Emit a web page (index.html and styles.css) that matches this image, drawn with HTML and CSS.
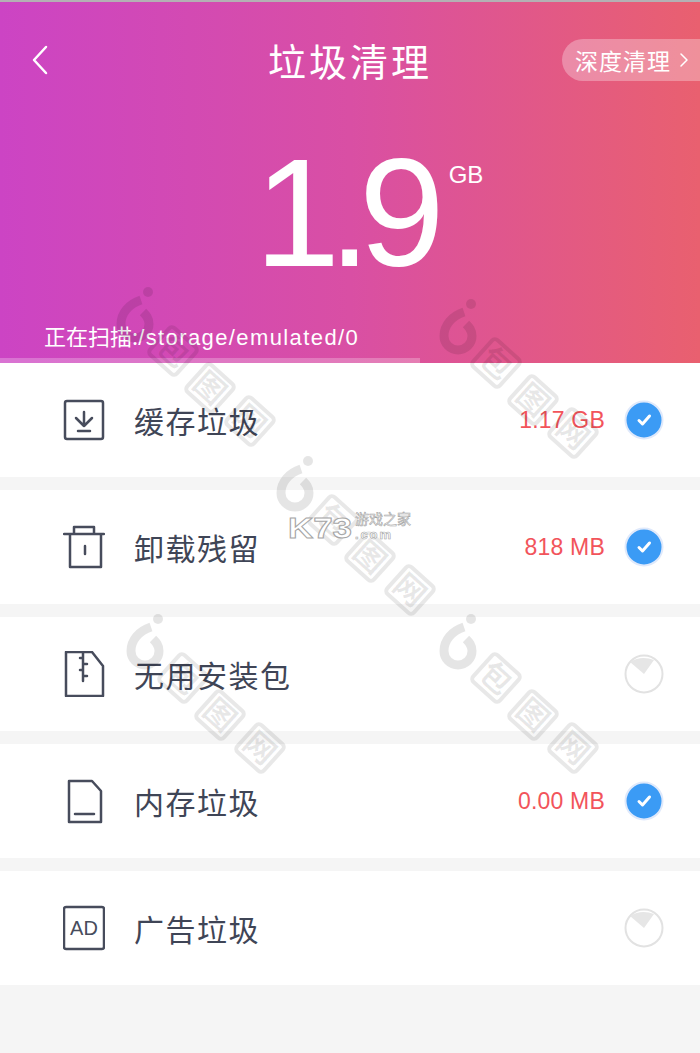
FILE: index.html
```html
<!DOCTYPE html>
<html lang="zh-CN">
<head>
    <meta charset="UTF-8">
    <meta name="viewport" content="width=device-width, initial-scale=1.0">
    <title>垃圾清理</title>
    <link rel="stylesheet" href="styles.css">
</head>
<body>
    <div class="page">
        <header class="summary">
            <div class="topbar">
                <svg class="back" width="20" height="32" viewBox="0 0 20 32"><path d="M16 3 4 16l12 13"/></svg>
                <h1>垃圾清理</h1>
                <div class="deep-clean">深度清理<svg width="12" height="16" viewBox="0 0 12 16"><path d="M3 2l6 6-6 6"/></svg></div>
            </div>
            <div class="total"><span class="total-num">1.9</span><span class="total-unit">GB</span></div>
            <div class="scan-path">正在扫描:<span>/storage/emulated/0</span></div>
            <div class="progress"><div class="progress-bar" style="width: 60%"></div></div>
        </header>

        <ul class="clean-list">
            <li class="clean-item">
                <svg class="item-icon" viewBox="0 0 42 46"><rect x="2" y="4" width="38" height="38" rx="2"/><path d="M21 15v14M13 21l8 8 8-8M15 34h12"/></svg>
                <span class="item-name">缓存垃圾</span>
                <span class="item-size">1.17 GB</span>
                <svg class="check" viewBox="0 0 40 40"><circle class="check-on" cx="20" cy="20" r="18.500"/><path class="check-mark" d="M15 20.500l3.500 3.500 7-8"/></svg>
            </li>
            <li class="clean-item">
                <svg class="item-icon" viewBox="0 0 42 46"><path d="M1 10h40M11 10V3h20v7M7 10v33h31V10M22 22v8"/></svg>
                <span class="item-name">卸载残留</span>
                <span class="item-size">818 MB</span>
                <svg class="check" viewBox="0 0 40 40"><circle class="check-on" cx="20" cy="20" r="18.500"/><path class="check-mark" d="M15 20.500l3.500 3.500 7-8"/></svg>
            </li>
            <li class="clean-item">
                <svg class="item-icon" viewBox="0 0 42 46"><path d="M3 1h26l11 14v30H3zM20 1v6h-3M20 7v6h4M20 13v6h-3M20 19v6h4M20 25v5"/></svg>
                <span class="item-name">无用安装包</span>
                <svg class="check" viewBox="0 0 40 40"><circle class="check-off" cx="20" cy="20" r="18.500"/><path class="check-wedge" d="M6 8Q17 1 30 6L20 20z"/></svg>
            </li>
            <li class="clean-item">
                <svg class="item-icon" viewBox="0 0 42 46"><path d="M6 3h23l9 10v31H6zM12 36h19"/></svg>
                <span class="item-name">内存垃圾</span>
                <span class="item-size">0.00 MB</span>
                <svg class="check" viewBox="0 0 40 40"><circle class="check-on" cx="20" cy="20" r="18.500"/><path class="check-mark" d="M15 20.500l3.500 3.500 7-8"/></svg>
            </li>
            <li class="clean-item">
                <svg class="item-icon" viewBox="0 0 42 46"><rect x="1" y="2" width="40" height="42" rx="2"/><text class="ad-text" x="21" y="30">AD</text></svg>
                <span class="item-name">广告垃圾</span>
                <svg class="check" viewBox="0 0 40 40"><circle class="check-off" cx="20" cy="20" r="18.500"/><path class="check-wedge" d="M6 8Q17 1 30 6L20 20z"/></svg>
            </li>
        </ul>

        <!-- stamp marks lying over the whole page -->
        <svg class="stamps" width="700" height="1053" viewBox="0 0 700 1053">
            <defs>
                <g id="stamp">
                    <path class="stamp-ring" d="M6-21C-6-17-14-8-14 3A14 14 0 1 0 14 3C14-3 11-6 8-9"/>
                    <circle class="stamp-dot" cx="13" cy="-29" r="5"/>
                    <g transform="translate(38 30) rotate(42)"><rect class="stamp-box" x="-18" y="-18" width="36" height="36" rx="4"/><text class="stamp-text" y="11">包</text></g>
                    <g transform="translate(75 67) rotate(42)"><rect class="stamp-box" x="-18" y="-18" width="36" height="36" rx="4"/><text class="stamp-text" y="11">图</text></g>
                    <g transform="translate(115 100) rotate(42)"><rect class="stamp-box" x="-18" y="-18" width="36" height="36" rx="4"/><text class="stamp-text" y="11">网</text></g>
                </g>
            </defs>
            <use href="#stamp" x="135" y="321"/>
            <use href="#stamp" x="458" y="333"/>
            <use href="#stamp" x="295" y="490"/>
            <use href="#stamp" x="145" y="648"/>
            <use href="#stamp" x="458" y="648"/>
            <text class="k73-logo" x="288" y="538" textLength="64" lengthAdjust="spacingAndGlyphs">K73</text>
            <text class="k73-cn" x="355" y="524" textLength="56">游戏之家</text>
            <text class="k73-com" x="355" y="539" textLength="36">.com</text>
        </svg>
    </div>
</body>
</html>
```

FILE: styles.css
```css
:root {
    --text-color: #3f4556;
    --icon-color: #474c5c;
    --size-color: #f2545b;
    --page-bg: #f5f5f5;
    --check-blue: #3b9bf5;
}

* {
    box-sizing: border-box;
}

body {
    margin: 0;
    background-color: var(--page-bg);
    font-family: "Liberation Sans", "Noto Sans CJK SC", sans-serif;
    color: var(--text-color);
}

.page {
    position: relative;
    width: 700px;
    height: 1053px;
    overflow: hidden;
}

/* header */
.summary {
    height: 363px;
    border-top: 2px solid #b4b0b4;
    background: linear-gradient(90deg, #cc44c4 0%, #d94fa4 50%, #e9606f 100%);
    color: white;
    display: flex;
    flex-direction: column;
}

.topbar {
    display: grid;
    grid-template-columns: 1fr auto 1fr;
    align-items: center;
    height: 42px;
    margin-top: 37px;
}

.back {
    margin-left: 30px;
}

.back path,
.deep-clean path {
    fill: none;
    stroke: white;
    stroke-width: 2.5;
    stroke-linecap: round;
    stroke-linejoin: round;
}

.deep-clean path {
    stroke-width: 1.5;
}

h1 {
    margin: 0;
    font-family: "Noto Sans CJK SC", sans-serif;
    font-size: 38px;
    font-weight: 400;
    letter-spacing: 3px;
    line-height: 42px;
}

.deep-clean {
    justify-self: end;
    display: flex;
    align-items: center;
    gap: 7px;
    width: 138px;
    height: 42px;
    padding-left: 13px;
    border-radius: 21px 0 0 21px;
    background-color: rgba(255, 255, 255, 0.3);
    font-family: "Noto Sans CJK SC", sans-serif;
    font-size: 23px;
    letter-spacing: 1px;
}

.total {
    display: flex;
    justify-content: center;
    margin-top: 52px;
    height: 160px;
    padding-left: 38px;
}

.total-num {
    font-size: 154px;
    letter-spacing: -12px;
    line-height: 160px;
}

.total-unit {
    margin: 28px 0 0 16px;
    font-size: 24px;
    line-height: 28px;
}

.scan-path {
    margin-top: 27px;
    padding-left: 44px;
    font-family: "Noto Sans CJK SC", sans-serif;
    font-size: 22px;
    line-height: 30px;
}

.scan-path span {
    font-family: "Liberation Sans", sans-serif;
    letter-spacing: 1.4px;
}

.progress {
    margin-top: auto;
    height: 5px;
}

.progress-bar {
    height: 100%;
    background-color: rgba(255, 255, 255, 0.25);
}

/* list */
.clean-list {
    list-style: none;
    margin: 0;
    padding: 0;
    display: flex;
    flex-direction: column;
    gap: 13px;
}

.clean-item {
    display: flex;
    align-items: center;
    height: 114px;
    padding: 0 36px 0 63px;
    background: white;
}

.item-icon {
    width: 42px;
    height: 46px;
    margin-right: 29px;
    fill: none;
    stroke: var(--icon-color);
    stroke-width: 2.5;
    stroke-linecap: round;
    stroke-linejoin: round;
}

.item-name {
    flex: 1;
    font-family: "Noto Sans CJK SC", sans-serif;
    font-size: 30px;
    letter-spacing: 1.5px;
}

.item-size {
    margin-right: 19px;
    color: var(--size-color);
    font-size: 23px;
    letter-spacing: 0.2px;
}

.check {
    width: 40px;
    height: 40px;
}

.check-on {
    fill: var(--check-blue);
    stroke: #dfe9fb;
    stroke-width: 2;
}

.check-mark {
    fill: none;
    stroke: white;
    stroke-width: 3;
    stroke-linecap: round;
    stroke-linejoin: round;
}

.check-off {
    fill: white;
    stroke: #e2e2e2;
    stroke-width: 2;
}

.check-wedge {
    fill: #e6e6e6;
}

.ad-text {
    fill: var(--icon-color);
    stroke: none;
    font-size: 20px;
    text-anchor: middle;
}

/* stamps */
.stamps {
    position: absolute;
    top: 0;
    left: 0;
    pointer-events: none;
}

.stamp-ring {
    fill: none;
    stroke: rgba(0, 0, 0, 0.1);
    stroke-width: 9;
}

.stamp-dot {
    fill: rgba(0, 0, 0, 0.1);
}

.stamp-box {
    fill: none;
    stroke: rgba(0, 0, 0, 0.09);
    stroke-width: 4;
}

.stamp-text {
    fill: rgba(0, 0, 0, 0.09);
    font-family: "Noto Sans CJK SC", sans-serif;
    font-size: 31px;
    font-weight: 700;
    text-anchor: middle;
}

.k73-logo {
    fill: white;
    stroke: #a5a5a5;
    stroke-width: 1;
    font-family: "Liberation Sans", sans-serif;
    font-size: 30px;
    font-weight: 700;
}

.k73-cn,
.k73-com {
    fill: white;
    stroke: #a5a5a5;
    stroke-width: 0.6;
    font-family: "Noto Sans CJK SC", sans-serif;
    font-size: 14px;
}

.k73-com {
    font-family: "Liberation Sans", sans-serif;
    font-size: 13px;
    font-weight: 700;
}
```
